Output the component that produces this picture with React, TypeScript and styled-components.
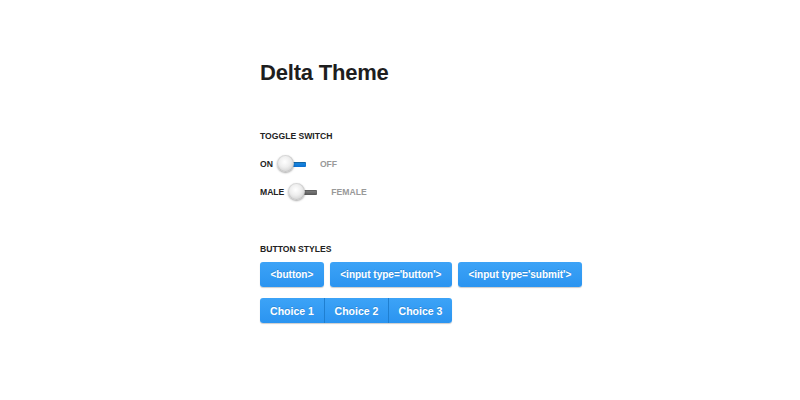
import * as React from "react";
import styled, { createGlobalStyle } from "styled-components";

const GlobalStyle = createGlobalStyle`
  html, body {
    margin: 0;
    padding: 0;
    background: #ffffff;
    font-family: "Liberation Sans", Arial, sans-serif;
  }
`;

const SPage = styled.div`
  width: 800px;
  height: 400px;
  box-sizing: border-box;
  padding: 59px 0 0 260px;
  color: #222;
`;

const STitle = styled.h1`
  margin: 0;
  font-size: 22px;
  font-weight: bold;
  line-height: 28px;
  color: #1e1e1e;
  letter-spacing: -0.2px;
`;

const SSection = styled.section<{ top: number }>`
  margin-top: ${({ top }) => top}px;
  display: flex;
  flex-direction: column;
`;

const SLabel = styled.h2`
  margin: 0;
  font-size: 8.6px;
  font-weight: bold;
  line-height: 12px;
  text-transform: uppercase;
  color: #222;
`;

const SToggleRow = styled.div<{ first?: boolean }>`
  display: flex;
  align-items: center;
  height: 20px;
  margin-top: ${({ first }) => (first ? 12 : 8)}px;
  font-size: 8.6px;
  font-weight: bold;
  text-transform: uppercase;
`;

const SOn = styled.span`
  color: #222;
  margin-right: 4px;
`;

const SOff = styled.span`
  color: #999;
  margin-left: 14px;
`;

const STrack = styled.div`
  position: relative;
  width: 29px;
  height: 18px;
  display: flex;
  align-items: center;
`;

const SBar = styled.div<{ on: boolean }>`
  margin-left: 10px;
  width: 19px;
  height: 5px;
  border-radius: 1px;
  background: ${({ on }) =>
    on ? "linear-gradient(#1d8fe6, #0c6fd0)" : "linear-gradient(#888, #555)"};
  box-shadow: inset 0 1px 1px rgba(0, 0, 0, 0.3);
`;

const SKnob = styled.div`
  position: absolute;
  left: 0;
  top: 0;
  width: 17px;
  height: 17px;
  border-radius: 50%;
  background: radial-gradient(circle at 45% 40%, #ffffff 0%, #eeeeee 40%, #bdbdbd 100%);
  box-shadow: 0 1px 2px rgba(0, 0, 0, 0.35), inset 0 0 0 1px rgba(0, 0, 0, 0.08);
`;

const SButtonRow = styled.div<{ top: number }>`
  display: flex;
  gap: 6px;
  margin-top: ${({ top }) => top}px;
`;

const SButton = styled.button`
  height: 25px;
  padding: 0 10.5px;
  border: none;
  border-radius: 3px;
  background: linear-gradient(#3ca3f7, #2b94f0);
  box-shadow: 0 1px 1px rgba(0, 0, 0, 0.2);
  color: #fff;
  font-family: "Liberation Sans", Arial, sans-serif;
  font-size: 10px;
  font-weight: bold;
  text-shadow: 0 -1px 0 rgba(0, 0, 0, 0.15);
  cursor: pointer;
`;

const SGroup = styled.div`
  display: flex;
  border-radius: 3px;
  overflow: hidden;
  box-shadow: 0 1px 1px rgba(0, 0, 0, 0.2);
`;

const SChoice = styled(SButton)`
  border-radius: 0;
  box-shadow: none;
  width: 64px;
  padding: 0;
  font-size: 10.5px;
  & + & {
    border-left: 1px solid #1f7fd0;
  }
`;

const Toggle = ({ on, left, right, first }: { on: boolean; left: string; right: string; first?: boolean }) => (
  <SToggleRow first={first}>
    <SOn>{left}</SOn>
    <STrack>
      <SBar on={on} />
      <SKnob />
    </STrack>
    <SOff>{right}</SOff>
  </SToggleRow>
);

export default function App() {
  return (
    <>
      <GlobalStyle />
      <SPage>
        <STitle>Delta Theme</STitle>
        <SSection top={43}>
          <SLabel>Toggle Switch</SLabel>
          <Toggle on left="On" right="Off" first />
          <Toggle on={false} left="Male" right="Female" />
        </SSection>
        <SSection top={41}>
          <SLabel>Button Styles</SLabel>
          <SButtonRow top={7}>
            <SButton>&lt;button&gt;</SButton>
            <SButton>&lt;input type='button'&gt;</SButton>
            <SButton>&lt;input type='submit'&gt;</SButton>
          </SButtonRow>
          <SButtonRow top={11}>
            <SGroup>
              <SChoice>Choice 1</SChoice>
              <SChoice>Choice 2</SChoice>
              <SChoice>Choice 3</SChoice>
            </SGroup>
          </SButtonRow>
        </SSection>
      </SPage>
    </>
  );
}
